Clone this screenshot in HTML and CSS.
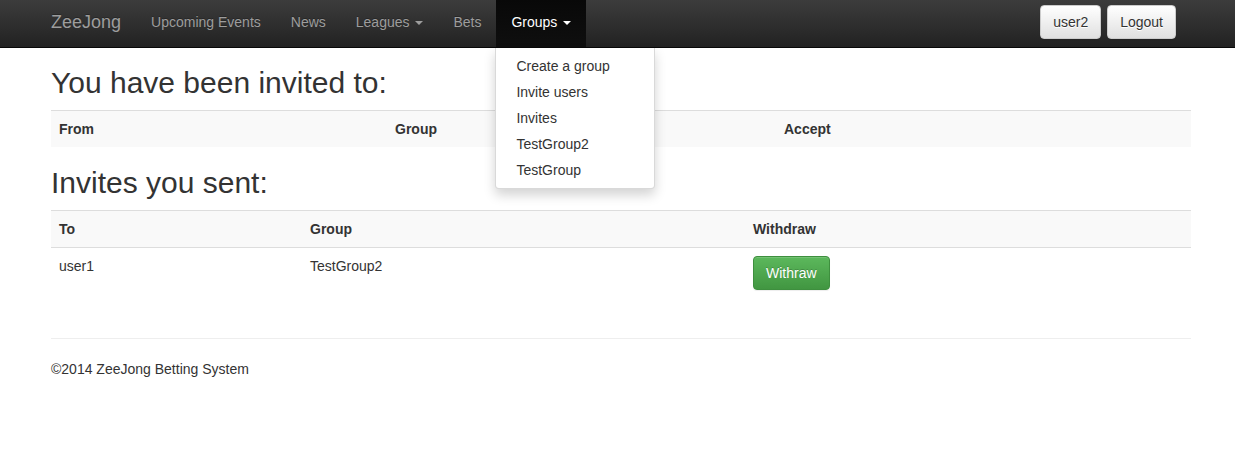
FILE: index.html
```html
<!DOCTYPE html>
<html>
<head>
<meta charset="utf-8">
<title>ZeeJong</title>
<link rel="stylesheet" href="styles.css">
</head>
<body>
<nav class="navbar">
  <div class="navbar-inner">
    <a class="brand" href="#">ZeeJong</a>
    <ul class="nav">
      <li><a href="#">Upcoming Events</a></li>
      <li><a href="#">News</a></li>
      <li><a href="#">Leagues <span class="caret"></span></a></li>
      <li><a href="#">Bets</a></li>
      <li class="active dropdown"><a href="#">Groups <span class="caret"></span></a>
        <ul class="dropdown-menu">
          <li><a href="#">Create a group</a></li>
          <li><a href="#">Invite users</a></li>
          <li><a href="#">Invites</a></li>
          <li><a href="#">TestGroup2</a></li>
          <li><a href="#">TestGroup</a></li>
        </ul>
      </li>
    </ul>
    <div class="nav-right">
      <button class="btn btn-default">user2</button>
      <button class="btn btn-default">Logout</button>
    </div>
  </div>
</nav>
<div class="container">
  <h2 class="first">You have been invited to:</h2>
  <table class="table table-invited">
    <colgroup><col class="c1a"><col class="c1b"><col class="c1c"></colgroup>
    <thead><tr><th>From</th><th>Group</th><th>Accept</th></tr></thead>
  </table>
  <h2>Invites you sent:</h2>
  <table class="table table-sent">
    <colgroup><col class="c2a"><col class="c2b"><col class="c2c"></colgroup>
    <thead><tr><th>To</th><th>Group</th><th>Withdraw</th></tr></thead>
    <tbody><tr><td>user1</td><td>TestGroup2</td><td><button class="btn btn-success">Withraw</button></td></tr></tbody>
  </table>
  <hr>
  <footer><p>©2014 ZeeJong Betting System</p></footer>
</div>
</body>
</html>
```
FILE: styles.css
```css
* { box-sizing: border-box; }
body {
  margin: 0;
  font-family: "Liberation Sans", Arial, sans-serif;
  font-size: 14px;
  line-height: 20px;
  color: #333;
  background: #fff;
}
a { text-decoration: none; }
ul { list-style: none; margin: 0; padding: 0; }

.navbar {
  height: 48px;
  background: linear-gradient(to bottom, #3c3c3c 0%, #222 100%);
  border-bottom: 1px solid #080808;
}
.navbar-inner {
  width: 1170px;
  margin-left: 36px;
  display: flex;
  align-items: flex-start;
  height: 47px;
}
.brand {
  display: block;
  padding: 12px 15px 15px;
  font-size: 18px;
  line-height: 20px;
  color: #9d9d9d;
  text-shadow: 0 -1px 0 rgba(0,0,0,.25);
}
.nav { display: flex; }
.nav > li { position: relative; }
.nav > li > a {
  display: block;
  padding: 12px 15px 15px;
  height: 47px;
  line-height: 20px;
  color: #9d9d9d;
  text-shadow: 0 -1px 0 rgba(0,0,0,.25);
}
.nav > li.active > a {
  color: #fff;
  background: linear-gradient(to bottom, #080808 0%, #0f0f0f 100%);
}
.caret {
  display: inline-block;
  width: 0;
  height: 0;
  margin-left: 2px;
  vertical-align: middle;
  border-top: 4px solid;
  border-right: 4px solid transparent;
  border-left: 4px solid transparent;
}
.dropdown-menu {
  position: absolute;
  top: 48px;
  left: -1px;
  z-index: 10;
  min-width: 160px;
  padding: 5px 0;
  background: #fff;
  border: 1px solid rgba(0,0,0,.15);
  border-top: 0;
  border-radius: 0 0 4px 4px;
  box-shadow: 0 6px 12px rgba(0,0,0,.175);
}
.dropdown-menu li a {
  display: block;
  padding: 3px 20px;
  line-height: 20px;
  color: #333;
  white-space: nowrap;
}
.nav-right {
  margin-left: auto;
  margin-right: 30px;
  margin-top: 5px;
  display: flex;
  gap: 6px;
}
.btn {
  display: inline-block;
  padding: 6px 12px;
  font-family: inherit;
  font-size: 14px;
  line-height: 20px;
  height: 34px;
  border-radius: 4px;
  border: 1px solid transparent;
  cursor: pointer;
}
.btn-default {
  color: #333;
  background: linear-gradient(to bottom, #fff 0%, #e0e0e0 100%);
  border-color: #ccc;
  text-shadow: 0 1px 0 #fff;
  box-shadow: inset 0 1px 0 rgba(255,255,255,.15), 0 1px 1px rgba(0,0,0,.075);
}
.btn-success {
  color: #fff;
  background: linear-gradient(to bottom, #5cb85c 0%, #419641 100%);
  border-color: #3e8f3e;
  text-shadow: 0 -1px 0 rgba(0,0,0,.2);
  box-shadow: inset 0 1px 0 rgba(255,255,255,.15), 0 1px 1px rgba(0,0,0,.075);
}

.container {
  width: 1140px;
  margin-left: 51px;
}
h2 {
  font-size: 30px;
  font-weight: normal;
  line-height: 33px;
  padding-top: 2px;
  margin: 0 0 11px;
  color: #333;
}
h2.first { margin-top: 16px; }
.table {
  width: 100%;
  border-collapse: collapse;
  border-spacing: 0;
}
.table-invited { margin-bottom: 17px; }
.table-sent { margin-bottom: 0; }
.table th {
  text-align: left;
  font-weight: bold;
  padding: 8px;
  line-height: 20px;
  background: #f9f9f9;
  border-top: 1px solid #ddd;
}
.table td {
  padding: 8px;
  line-height: 20px;
  vertical-align: top;
  border-top: 1px solid #ddd;
}
.c1a { width: 336px; }
.c1b { width: 389px; }
.c1c { width: 415px; }
.c2a { width: 251px; }
.c2b { width: 443px; }
.c2c { width: 446px; }
hr {
  margin: 40px 0 20px;
  border: 0;
  border-top: 1px solid #eee;
}
footer p { margin: 0 0 10px; }
```
